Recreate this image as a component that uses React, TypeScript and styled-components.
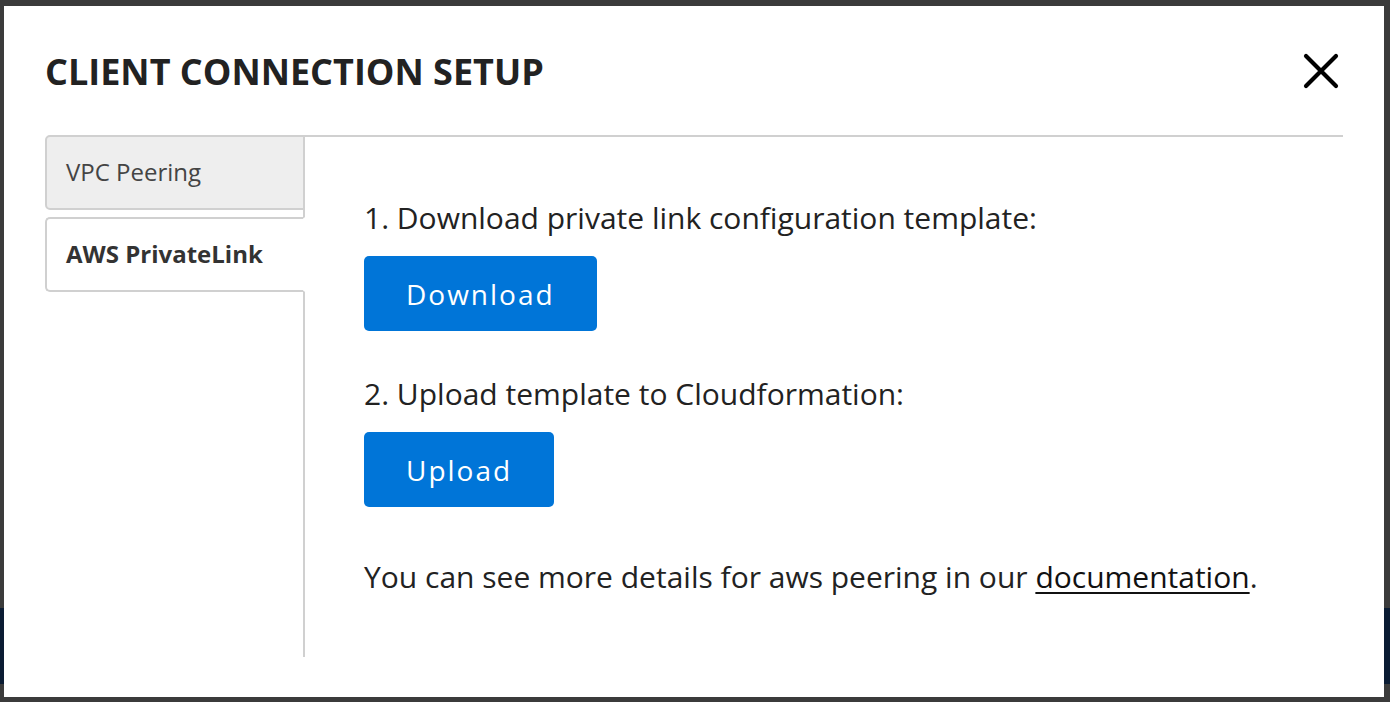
import { FC, useState } from 'react';
import styled, { createGlobalStyle } from 'styled-components';

const GlobalStyle = createGlobalStyle`
  html, body {
    margin: 0;
    padding: 0;
    overflow: hidden;
  }
  body {
    font-family: 'Open Sans', 'Noto Sans', sans-serif;
    color: #222;
  }
`;

const Backdrop = styled.div`
  width: 1390px;
  height: 702px;
  box-sizing: border-box;
  padding: 6px 6px 5px 4px;
  background: linear-gradient(
    to bottom,
    #3b3b3b 0,
    #3b3b3b 608px,
    #0b1c33 608px,
    #0b1c33 684px,
    #3b3b3b 684px
  );
`;

const Modal = styled.div`
  height: 100%;
  box-sizing: border-box;
  background: #fff;
  padding: 35px 41px 40px 41px;
  display: flex;
  flex-direction: column;
`;

const Header = styled.div`
  display: flex;
  align-items: center;
  justify-content: space-between;
  height: 60px;
  margin-bottom: 34px;
`;

const Title = styled.h1`
  margin: 0;
  font-size: 36px;
  font-weight: 700;
  color: #222;
`;

const CloseButton = styled.button`
  border: 0;
  background: none;
  padding: 0;
  margin-right: 2px;
  width: 40px;
  height: 40px;
  display: flex;
  align-items: center;
  justify-content: center;
  cursor: pointer;
`;

const Body = styled.div`
  flex: 1;
  display: flex;
`;

const TabList = styled.div`
  width: 260px;
  margin-right: -2px;
  display: flex;
  flex-direction: column;
  gap: 7px;
  position: relative;
  z-index: 1;
`;

const Tab = styled.button<{ $active: boolean }>`
  height: 75px;
  box-sizing: border-box;
  border: 2px solid #d0d0d0;
  border-right-color: ${(p) => (p.$active ? '#fff' : '#d0d0d0')};
  border-radius: 5px 0 0 5px;
  background: ${(p) => (p.$active ? '#fff' : '#eeeeee')};
  font-family: inherit;
  font-size: 24px;
  font-weight: ${(p) => (p.$active ? 700 : 400)};
  color: ${(p) => (p.$active ? '#333' : '#444')};
  text-align: left;
  padding: 0 0 3px 19px;
  cursor: pointer;
`;

const Panel = styled.div`
  flex: 1;
  border-top: 2px solid #d0d0d0;
  border-left: 2px solid #d0d0d0;
  padding: 61px 0 0 59px;
`;

const Step = styled.p`
  margin: 0;
  font-size: 30px;
  line-height: 40px;
  color: #222;
`;

const PrimaryButton = styled.button`
  display: block;
  margin: 18px 0 43px;
  height: 75px;
  padding: 0 42px 0 42px;
  border: 0;
  border-radius: 5px;
  background: #0075d8;
  color: #fff;
  font-family: inherit;
  font-size: 28px;
  letter-spacing: 2px;
  cursor: pointer;
`;

const Note = styled(Step)`
  margin-top: 50px;
`;

const DocLink = styled.a`
  color: #111;
  text-decoration: underline;
  text-underline-offset: 4px;
  text-decoration-thickness: 2px;
`;

const CloseIcon: FC = () => (
  <svg width="36" height="36" viewBox="0 0 36 36">
    <path d="M3 3 L33 33 M33 3 L3 33" stroke="#000" strokeWidth="4.2" strokeLinecap="round" />
  </svg>
);

const tabs = ['VPC Peering', 'AWS PrivateLink'];

const App: FC = () => {
  const [active, setActive] = useState(1);

  return (
    <>
      <GlobalStyle />
      <Backdrop>
        <Modal>
          <Header>
            <Title>CLIENT CONNECTION SETUP</Title>
            <CloseButton aria-label="Close">
              <CloseIcon />
            </CloseButton>
          </Header>
          <Body>
            <TabList>
              {tabs.map((t, idx) => (
                <Tab key={t} $active={idx === active} onClick={() => setActive(idx)}>
                  {t}
                </Tab>
              ))}
            </TabList>
            <Panel>
              <Step>1. Download private link configuration template:</Step>
              <PrimaryButton>Download</PrimaryButton>
              <Step>2. Upload template to Cloudformation:</Step>
              <PrimaryButton>Upload</PrimaryButton>
              <Note>
                You can see more details for aws peering in our{' '}
                <DocLink href="#">documentation</DocLink>.
              </Note>
            </Panel>
          </Body>
        </Modal>
      </Backdrop>
    </>
  );
};

export default App;
